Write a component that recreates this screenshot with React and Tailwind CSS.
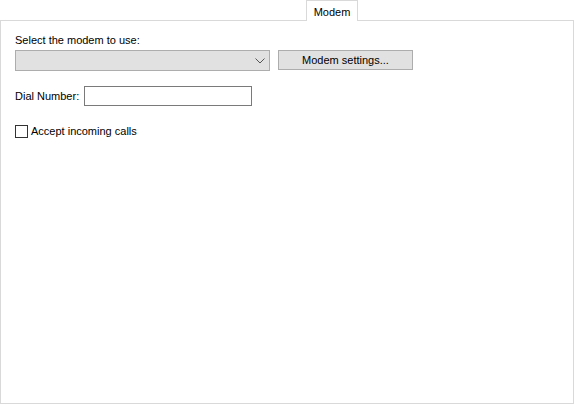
export default function App() {
  return (
    <div
      className="w-[575px] h-[404px] bg-white text-[11px] leading-[14px] text-black flex flex-col"
      style={{ fontFamily: '"Liberation Sans", Arial, sans-serif' }}
    >
      <div className="flex h-[20px] shrink-0">
        <div className="ml-[306px] w-[52px] h-[21px] border border-b-0 border-[#d9d9d9] bg-white relative z-10 flex items-center justify-center pt-[1px]">
          Modem
        </div>
      </div>
      <div className="w-[574px] h-[384px] border border-[#d9d9d9] flex flex-col pl-[14px] pt-[12px]">
        <div className="h-[14px] whitespace-nowrap">Select the modem to use:</div>
        <div className="flex mt-[3px] items-start">
          <div className="w-[255px] h-[21px] border border-[#adadad] bg-[#e1e1e1] flex items-center justify-end pr-[4px]">
            <svg width="10" height="6" viewBox="0 0 10 6" fill="none">
              <path d="M0.5 0.5 L5 5 L9.5 0.5" stroke="#555" strokeWidth="1" />
            </svg>
          </div>
          <div className="ml-[8px] w-[135px] h-[20px] border border-[#adadad] bg-[#e1e1e1] flex items-center justify-center whitespace-nowrap">
            Modem settings...
          </div>
        </div>
        <div className="flex items-center mt-[15px]">
          <div className="w-[69px] shrink-0 whitespace-nowrap">Dial Number:</div>
          <div className="w-[168px] h-[20px] shrink-0 border border-[#7a7a7a] bg-white" />
        </div>
        <div className="flex items-center mt-[18px]">
          <div className="w-[13px] h-[13px] shrink-0 border border-[#333333] bg-white" />
          <div className="ml-[3px] whitespace-nowrap">Accept incoming calls</div>
        </div>
      </div>
    </div>
  );
}
